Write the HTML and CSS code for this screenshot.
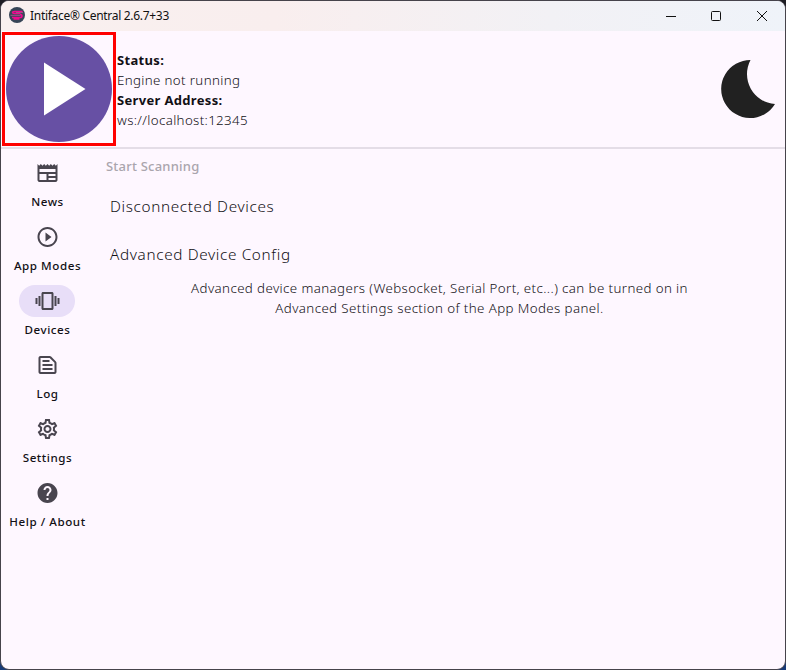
FILE: index.html
```
<!DOCTYPE html>
<html lang="en">
<head>
<meta charset="utf-8">
<title>Intiface® Central</title>
<link rel="stylesheet" href="styles.css">
</head>
<body>
<div class="window">
  <header class="titlebar">
    <svg class="logo" viewBox="0 0 16 16"><circle cx="8" cy="8" r="8" fill="#374557"/><path d="M13.5 4.5H5.500Q3.500 4.500 3.500 5.500T5.500 6.500h6M3 10.500h8q2 0 2-1.500t-2-1.500M4.500 12h6" fill="none" stroke="#f0088f" stroke-width="1.600"/><path d="M1.500 8.300h10M7 5.600h7" fill="none" stroke="#a0578b" stroke-width="1"/></svg>
    <span class="title">Intiface® Central 2.6.7+33</span>
    <div class="controls">
      <svg viewBox="0 0 12 12"><path d="M1 6.5h10"/></svg>
      <svg viewBox="0 0 12 12"><rect x="1.5" y="1.5" width="9" height="9" rx="1"/></svg>
      <svg viewBox="0 0 12 12"><path d="M1 1l10 10M11 1L1 11"/></svg>
    </div>
  </header>
  <section class="statusbar">
    <div class="play"><svg viewBox="0 0 106 106"><circle cx="53" cy="53" r="53" fill="#6750a4"/><path d="M38 26.5v53L79.5 53z" fill="#fff"/></svg></div>
    <div class="status">
      <b>Status:</b>
      <span>Engine not running</span>
      <b>Server Address:</b>
      <span>ws://localhost:12345</span>
    </div>
    <svg class="moon" viewBox="0 0 56 60"><path d="M30.5 1A29 29 0 1 0 55 45A30 30 0 0 1 30.5 1z" fill="#212121"/></svg>
  </section>
  <div class="body">
    <nav class="rail">
      <a class="item"><span class="pill"><svg viewBox="0 0 24 24"><path d="M22 3l-1.67 1.67L18.67 3 17 4.67 15.33 3l-1.66 1.67L12 3l-1.67 1.67L8.67 3 7 4.67 5.33 3 3.67 4.67 2 3v16c0 1.1.9 2 2 2h16c1.1 0 2-.9 2-2V3zM11 19H4v-6h7v6zm9 0h-7v-2h7v2zm0-4h-7v-2h7v2zm0-4H4V8h16v3z"/></svg></span><span class="label">News</span></a>
      <a class="item"><span class="pill"><svg viewBox="0 0 24 24"><path d="M10 16.5l6-4.5-6-4.5v9zM12 2C6.48 2 2 6.48 2 12s4.48 10 10 10 10-4.48 10-10S17.52 2 12 2zm0 18c-4.41 0-8-3.59-8-8s3.59-8 8-8 8 3.59 8 8-3.59 8-8 8z"/></svg></span><span class="label">App Modes</span></a>
      <a class="item selected"><span class="pill"><svg viewBox="0 0 24 24"><path d="M0 15h2V9H0v6zm3 2h2V7H3v10zm19-8v6h2V9h-2zm-3 8h2V7h-2v10zM16.5 3h-9C6.67 3 6 3.67 6 4.5v15c0 .83.67 1.5 1.5 1.5h9c.83 0 1.5-.67 1.5-1.5v-15c0-.83-.67-1.5-1.5-1.5zM16 19H8V5h8v14z"/></svg></span><span class="label">Devices</span></a>
      <a class="item"><span class="pill"><svg viewBox="0 0 24 24"><path fill-rule="evenodd" d="M14.17 5L19 9.83V19H5V5h9.17M14.17 3H5c-1.1 0-2 .9-2 2v14c0 1.1.9 2 2 2h14c1.1 0 2-.9 2-2V9.83c0-.53-.21-1.04-.59-1.41l-4.83-4.83C15.21 3.21 14.7 3 14.17 3zM7 15h10v2H7v-2zM7 11h10v2H7v-2zM7 7h7v2H7V7z"/></svg></span><span class="label">Log</span></a>
      <a class="item"><span class="pill"><svg viewBox="0 0 24 24"><path d="M19.43 12.98c.04-.32.07-.64.07-.98 0-.34-.03-.66-.07-.98l2.11-1.65c.19-.15.24-.42.12-.64l-2-3.46c-.09-.16-.26-.25-.44-.25-.06 0-.12.01-.17.03l-2.49 1c-.52-.4-1.08-.73-1.69-.98l-.38-2.65C14.46 2.18 14.25 2 14 2h-4c-.25 0-.46.18-.49.42l-.38 2.65c-.61.25-1.17.59-1.69.98l-2.49-1c-.06-.02-.12-.03-.18-.03-.17 0-.34.09-.43.25l-2 3.46c-.13.22-.07.49.12.64l2.11 1.65c-.04.32-.07.65-.07.98 0 .33.03.66.07.98l-2.11 1.65c-.19.15-.24.42-.12.64l2 3.46c.09.16.26.25.44.25.06 0 .12-.01.17-.03l2.49-1c.52.4 1.08.73 1.69.98l.38 2.65c.03.24.24.42.49.42h4c.25 0 .46-.18.49-.42l.38-2.65c.61-.25 1.17-.59 1.69-.98l2.49 1c.06.02.12.03.18.03.17 0 .34-.09.43-.25l2-3.46c.12-.22.07-.49-.12-.64l-2.11-1.65zm-1.98-1.71c.04.31.05.52.05.73 0 .21-.02.43-.05.73l-.14 1.13.89.7 1.08.84-.7 1.21-1.27-.51-1.04-.42-.9.68c-.43.32-.84.56-1.25.73l-1.06.43-.16 1.13-.2 1.35h-1.4l-.19-1.35-.16-1.13-1.06-.43c-.43-.18-.83-.41-1.23-.71l-.91-.7-1.06.43-1.27.51-.7-1.21 1.08-.84.89-.7-.14-1.13c-.03-.31-.05-.54-.05-.74s.02-.43.05-.73l.14-1.13-.89-.7-1.08-.84.7-1.21 1.27.51 1.04.42.9-.68c.43-.32.84-.56 1.25-.73l1.06-.43.16-1.13.2-1.35h1.39l.19 1.35.16 1.13 1.06.43c.43.18.83.41 1.23.71l.91.7 1.06-.43 1.27-.51.7 1.21-1.07.85-.89.7.14 1.13zM12 8c-2.21 0-4 1.79-4 4s1.79 4 4 4 4-1.79 4-4-1.79-4-4-4zm0 6c-1.1 0-2-.9-2-2s.9-2 2-2 2 .9 2 2-.9 2-2 2z"/></svg></span><span class="label">Settings</span></a>
      <a class="item"><span class="pill"><svg viewBox="0 0 24 24"><path d="M12 2C6.48 2 2 6.48 2 12s4.48 10 10 10 10-4.48 10-10S17.52 2 12 2zm1 17h-2v-2h2v2zm2.07-7.75l-.9.92C13.45 12.9 13 13.5 13 15h-2v-.5c0-1.1.45-2.1 1.17-2.83l1.24-1.26c.37-.36.59-.86.59-1.41 0-1.1-.9-2-2-2s-2 .9-2 2H8c0-2.21 1.79-4 4-4s4 1.79 4 4c0 .88-.36 1.68-.93 2.25z"/></svg></span><span class="label">Help / About</span></a>
    </nav>
    <main class="panel">
      <div class="scan">Start Scanning</div>
      <h2 class="disconnected">Disconnected Devices</h2>
      <h2 class="advanced">Advanced Device Config</h2>
      <p class="note">Advanced device managers (Websocket, Serial Port, etc...) can be turned on in<br>Advanced Settings section of the App Modes panel.</p>
    </main>
  </div>
</div>
</body>
</html>
```
FILE: styles.css
```
* { box-sizing: border-box; }
body {
  margin: 0;
  height: 670px;
  overflow: hidden;
  background: linear-gradient(#1e1d24 0 50%, #173a78);
  font-family: "Noto Sans", "Open Sans", sans-serif;
  color: #121015;
}
svg { display: block; flex: none; }
.window {
  height: 670px;
  border: 1px solid #46434b;
  border-radius: 9px;
  overflow: hidden;
  background: #fef7ff;
}
.titlebar {
  display: flex;
  align-items: center;
  height: 30px;
  padding: 0 17px 0 8px;
  background: linear-gradient(90deg, #f9f0ef, #f9eeee 35%, #f2f1f5 70%, #eff3f9);
}
.logo { width: 16px; height: 16px; margin-top: -2px; }
.title { margin-left: 5px; font-size: 12px; line-height: 16px; letter-spacing: -0.3px; color: #111; white-space: nowrap; }
.controls { display: flex; gap: 34px; margin-left: auto; margin-top: -1px; }
.controls svg { width: 12px; height: 12px; fill: none; stroke: #111; stroke-width: 1; }
.controls svg:first-child { margin-right: -1px; }
.statusbar {
  display: flex;
  align-items: center;
  height: 118px;
  padding: 0 9px 0 1px;
  border-bottom: 2px solid #e4dde7;
}
.play { width: 114px; height: 114px; padding: 1px; border: 3px solid #f00; }
.play svg { width: 106px; height: 106px; }
.status { display: flex; flex-direction: column; margin-left: 1px; padding-top: 2px; font-size: 13.3px; line-height: 20px; font-weight: 300; letter-spacing: 0.36px; white-space: nowrap; }
.status b { font-size: 13px; font-weight: 700; letter-spacing: 0.33px; }
.moon { width: 56px; height: 60px; margin-left: auto; }
.body { display: flex; }
.rail { width: 92px; padding-top: 8px; }
.item { display: flex; flex-direction: column; align-items: center; height: 64px; }
.pill { display: flex; align-items: center; justify-content: center; width: 56px; height: 32px; border-radius: 16px; }
.selected .pill { background: #e8def8; }
.pill svg { width: 24px; height: 24px; fill: #49454f; overflow: visible; }
.pill path { transform: translateX(0.5px); }
.item .label { margin-top: 5px; padding-left: 1px; font-size: 11.6px; line-height: 16px; font-weight: 500; letter-spacing: 0.55px; white-space: nowrap; }
.panel { flex: 1; padding: 7px 0 0 1px; }
.scan { margin-left: 12px; font-size: 13px; line-height: 20px; font-weight: 500; letter-spacing: 0.22px; color: #aaa5ad; }
.panel h2 { margin: 0 0 0 16px; font-size: 15.3px; line-height: 24px; font-weight: 300; letter-spacing: 0.65px; }
.panel .disconnected { margin-top: 18px; }
.panel .advanced { margin-top: 24px; }
.note { margin: 12px 0 0; text-align: center; font-size: 13.3px; line-height: 20px; font-weight: 300; letter-spacing: 0.4px; white-space: nowrap; }
```
